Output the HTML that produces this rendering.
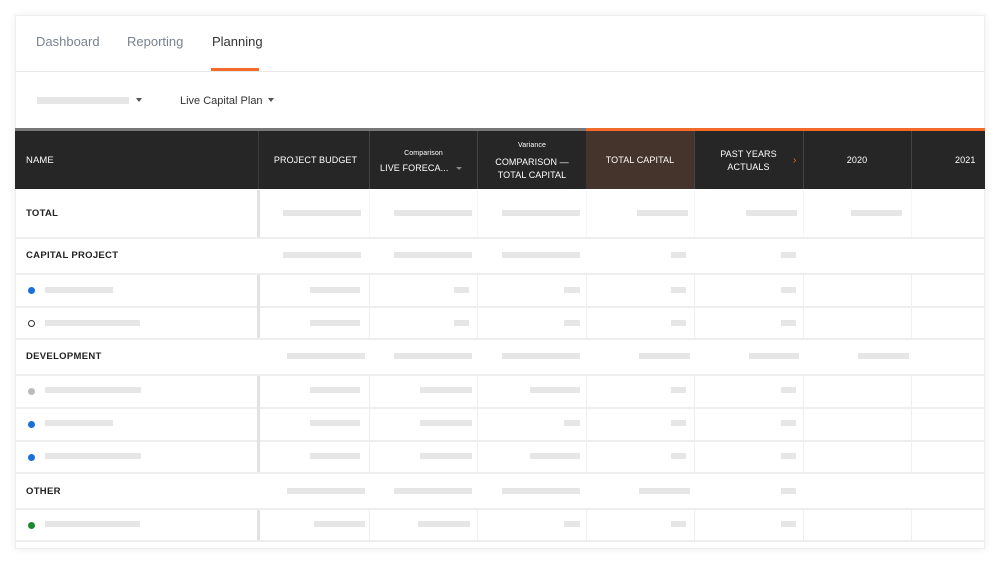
<!DOCTYPE html>
<html><head><meta charset="utf-8"><style>
body{margin:0;width:1000px;height:564px;background:#fff;font-family:"Liberation Sans",sans-serif;position:relative;overflow:hidden}
.card{position:absolute;left:15px;top:15px;width:970px;height:534px;background:#fff;box-shadow:0 0 8px rgba(0,0,0,.08);border:1px solid #eee;box-sizing:border-box}
.a{position:absolute}
.t{position:absolute;font-size:13px;color:#7a8390}
.b{position:absolute;height:6px;background:#e6e6e6}
.h{position:absolute;color:#fff;font-size:9.5px;text-align:center;letter-spacing:.1px}
.g{position:absolute;font-size:9.5px;font-weight:bold;color:#222;letter-spacing:.3px}
.vl{position:absolute;width:1px;background:#efefef}
.hl{position:absolute;left:15px;width:970px;height:2px;background:#eee}
.dot{position:absolute;left:28px;width:7px;height:7px;border-radius:50%}
</style></head><body>
<div class="card"></div>
<div class="t" style="left:36px;top:34px">Dashboard</div>
<div class="t" style="left:127px;top:34px">Reporting</div>
<div class="t" style="left:212px;top:34px;color:#333">Planning</div>
<div class="a" style="left:211px;top:68px;width:48px;height:3px;background:#f26b2a"></div>
<div class="a" style="left:15px;top:71px;width:970px;height:1px;background:#e8e8e8"></div>
<div class="b" style="left:37px;top:97px;width:92px;height:7px"></div>
<div class="a" style="left:136px;top:98px;border:3px solid transparent;border-top:4px solid #555"></div>
<div class="a" style="left:180px;top:95px;font-size:11px;color:#333">Live Capital Plan</div>
<div class="a" style="left:268px;top:98px;border:3px solid transparent;border-top:4px solid #555"></div>
<div class="a" style="left:15px;top:128px;width:571px;height:3px;background:#777"></div>
<div class="a" style="left:586px;top:128px;width:399px;height:3px;background:#f26b2a"></div>
<div class="a" style="left:15px;top:131px;width:970px;height:58px;background:#262626"></div>
<div class="a" style="left:586px;top:131px;width:108px;height:58px;background:#45342c"></div>
<div class="a" style="left:258px;top:131px;width:1px;height:58px;background:#3c3c3c"></div>
<div class="a" style="left:369px;top:131px;width:1px;height:58px;background:#444"></div>
<div class="a" style="left:477px;top:131px;width:1px;height:58px;background:#444"></div>
<div class="a" style="left:694px;top:131px;width:1px;height:58px;background:#444"></div>
<div class="a" style="left:803px;top:131px;width:1px;height:58px;background:#444"></div>
<div class="a" style="left:911px;top:131px;width:1px;height:58px;background:#444"></div>
<div class="h" style="left:26px;top:155px">NAME</div>
<div class="h" style="left:262px;top:155px;width:107px;font-size:9px">PROJECT BUDGET</div>
<div class="h" style="left:370px;top:150px;width:107px;font-size:7px">Comparison</div>
<div class="h" style="left:380px;top:163px;font-size:9px">LIVE FORECA...</div>
<div class="a" style="left:456px;top:167px;border:3px solid transparent;border-top:3px solid #888"></div>
<div class="h" style="left:478px;top:142px;width:108px;font-size:7px">Variance</div>
<div class="h" style="left:478px;top:156px;width:108px;line-height:13px;font-size:9px">COMPARISON —<br>TOTAL CAPITAL</div>
<div class="h" style="left:586px;top:155px;width:108px;font-size:9px">TOTAL CAPITAL</div>
<div class="h" style="left:694px;top:148px;width:109px;line-height:13px;font-size:9px">PAST YEARS<br>ACTUALS</div>
<div class="a" style="left:793px;top:155px;color:#f26b2a;font-size:10px">›</div>
<div class="h" style="left:803px;top:155px;width:108px;font-size:9px">2020</div>
<div class="h" style="left:955px;top:155px;font-size:9px">2021</div>
<div class="hl" style="top:237px"></div><div class="hl" style="top:273px"></div><div class="hl" style="top:306px"></div><div class="hl" style="top:338px"></div><div class="hl" style="top:374px"></div><div class="hl" style="top:407px"></div><div class="hl" style="top:440px"></div><div class="hl" style="top:472px"></div><div class="hl" style="top:508px"></div><div class="hl" style="top:540px"></div>
<div class="a" style="left:257px;top:190px;width:3px;height:47px;background:#e2e2e2"></div>
<div class="a" style="left:257px;top:275px;width:3px;height:63px;background:#e2e2e2"></div>
<div class="a" style="left:257px;top:376px;width:3px;height:96px;background:#e2e2e2"></div>
<div class="a" style="left:257px;top:510px;width:3px;height:30px;background:#e2e2e2"></div>
<div class="vl" style="left:369px;top:190px;height:47px;background:#f7f7f7"></div><div class="vl" style="left:477px;top:190px;height:47px;background:#f7f7f7"></div><div class="vl" style="left:586px;top:190px;height:47px;background:#f7f7f7"></div><div class="vl" style="left:694px;top:190px;height:47px;background:#f7f7f7"></div><div class="vl" style="left:803px;top:190px;height:47px;background:#f7f7f7"></div><div class="vl" style="left:911px;top:190px;height:47px;background:#f7f7f7"></div>
<div class="vl" style="left:369px;top:275px;height:63px"></div><div class="vl" style="left:477px;top:275px;height:63px"></div><div class="vl" style="left:586px;top:275px;height:63px"></div><div class="vl" style="left:694px;top:275px;height:63px"></div><div class="vl" style="left:803px;top:275px;height:63px"></div><div class="vl" style="left:911px;top:275px;height:63px"></div>
<div class="vl" style="left:369px;top:376px;height:96px"></div><div class="vl" style="left:477px;top:376px;height:96px"></div><div class="vl" style="left:586px;top:376px;height:96px"></div><div class="vl" style="left:694px;top:376px;height:96px"></div><div class="vl" style="left:803px;top:376px;height:96px"></div><div class="vl" style="left:911px;top:376px;height:96px"></div>
<div class="vl" style="left:369px;top:510px;height:30px"></div><div class="vl" style="left:477px;top:510px;height:30px"></div><div class="vl" style="left:586px;top:510px;height:30px"></div><div class="vl" style="left:694px;top:510px;height:30px"></div><div class="vl" style="left:803px;top:510px;height:30px"></div><div class="vl" style="left:911px;top:510px;height:30px"></div>
<div class="g" style="left:26px;top:208px">TOTAL</div>
<div class="g" style="left:26px;top:250px">CAPITAL PROJECT</div>
<div class="g" style="left:26px;top:351px">DEVELOPMENT</div>
<div class="g" style="left:26px;top:486px">OTHER</div>
<div class="dot" style="top:287px;background:#1a6fdb"></div>
<div class="dot" style="top:320px;border:1.5px solid #333;width:5px;height:5px"></div>
<div class="dot" style="top:388px;background:#bbb"></div>
<div class="dot" style="top:421px;background:#1a6fdb"></div>
<div class="dot" style="top:454px;background:#1a6fdb"></div>
<div class="dot" style="top:522px;background:#1a8a2e"></div>
<div class="b" style="top:210px;left:283px;width:78px"></div><div class="b" style="top:210px;left:394px;width:78px"></div><div class="b" style="top:210px;left:502px;width:78px"></div><div class="b" style="top:210px;left:637px;width:51px"></div><div class="b" style="top:210px;left:746px;width:51px"></div><div class="b" style="top:210px;left:851px;width:51px"></div>
<div class="b" style="top:252px;left:283px;width:78px"></div><div class="b" style="top:252px;left:394px;width:78px"></div><div class="b" style="top:252px;left:502px;width:78px"></div><div class="b" style="top:252px;left:671px;width:15px"></div><div class="b" style="top:252px;left:781px;width:15px"></div>
<div class="b" style="top:287px;left:45px;width:68px"></div><div class="b" style="top:287px;left:310px;width:50px"></div><div class="b" style="top:287px;left:454px;width:15px"></div><div class="b" style="top:287px;left:564px;width:16px"></div><div class="b" style="top:287px;left:671px;width:15px"></div><div class="b" style="top:287px;left:781px;width:15px"></div>
<div class="b" style="top:320px;left:45px;width:95px"></div><div class="b" style="top:320px;left:310px;width:50px"></div><div class="b" style="top:320px;left:454px;width:15px"></div><div class="b" style="top:320px;left:564px;width:16px"></div><div class="b" style="top:320px;left:671px;width:15px"></div><div class="b" style="top:320px;left:781px;width:15px"></div>
<div class="b" style="top:353px;left:287px;width:78px"></div><div class="b" style="top:353px;left:394px;width:78px"></div><div class="b" style="top:353px;left:502px;width:78px"></div><div class="b" style="top:353px;left:639px;width:51px"></div><div class="b" style="top:353px;left:749px;width:50px"></div><div class="b" style="top:353px;left:858px;width:51px"></div>
<div class="b" style="top:387px;left:45px;width:96px"></div><div class="b" style="top:387px;left:310px;width:50px"></div><div class="b" style="top:387px;left:420px;width:52px"></div><div class="b" style="top:387px;left:530px;width:50px"></div><div class="b" style="top:387px;left:671px;width:15px"></div><div class="b" style="top:387px;left:781px;width:15px"></div>
<div class="b" style="top:420px;left:45px;width:68px"></div><div class="b" style="top:420px;left:310px;width:50px"></div><div class="b" style="top:420px;left:420px;width:52px"></div><div class="b" style="top:420px;left:564px;width:16px"></div><div class="b" style="top:420px;left:671px;width:15px"></div><div class="b" style="top:420px;left:781px;width:15px"></div>
<div class="b" style="top:453px;left:45px;width:96px"></div><div class="b" style="top:453px;left:310px;width:50px"></div><div class="b" style="top:453px;left:420px;width:52px"></div><div class="b" style="top:453px;left:530px;width:50px"></div><div class="b" style="top:453px;left:671px;width:15px"></div><div class="b" style="top:453px;left:781px;width:15px"></div>
<div class="b" style="top:488px;left:287px;width:78px"></div><div class="b" style="top:488px;left:394px;width:78px"></div><div class="b" style="top:488px;left:502px;width:78px"></div><div class="b" style="top:488px;left:639px;width:51px"></div><div class="b" style="top:488px;left:781px;width:15px"></div>
<div class="b" style="top:521px;left:45px;width:95px"></div><div class="b" style="top:521px;left:314px;width:51px"></div><div class="b" style="top:521px;left:418px;width:52px"></div><div class="b" style="top:521px;left:564px;width:16px"></div><div class="b" style="top:521px;left:671px;width:15px"></div><div class="b" style="top:521px;left:781px;width:15px"></div>
</body></html>
